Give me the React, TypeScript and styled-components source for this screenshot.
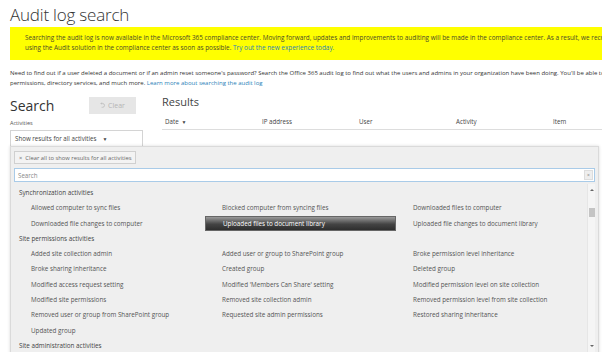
import styled, { createGlobalStyle } from 'styled-components'

const GlobalStyle = createGlobalStyle`
    body{
        margin: 0;
        background: #fff;
        font-family: "Open Sans", "Noto Sans", sans-serif;
        overflow: hidden;
    }
`

const Page = styled.div`
    position: relative;
    width: 602px;
    height: 352px;
    overflow: hidden;
    padding-left: 10px;
    box-sizing: border-box;
    color: #444;
`

const Title = styled.h1`
    margin: 0;
    padding-top: 3px;
    height: 24px;
    font-size: 17px;
    font-weight: 300;
    line-height: 24px;
    color: #333;
    letter-spacing: -0.2px;
`

const Banner = styled.div`
    background: #ffff00;
    height: 33px;
    padding: 6px 0 0 15px;
    box-sizing: border-box;
    font-size: 6.4px;
    line-height: 10px;
    color: #4a4a2a;
    white-space: nowrap;
`

const Line = styled.div`
    white-space: nowrap;
`

const Link = styled.span`
    color: #2a7fb8;
`

const Intro = styled.div`
    margin-top: 8px;
    font-size: 6px;
    line-height: 10px;
    color: #333;
`

const Main = styled.div`
    display: grid;
    grid-template-columns: 152px 1fr;
    margin-top: 3px;
`

const SearchHead = styled.div`
    display: flex;
    align-items: center;
    height: 28px;
`

const Heading = styled.h2`
    margin: 0;
    width: 79px;
    font-size: 14px;
    font-weight: 400;
    line-height: 19px;
    color: #333;
`

const ClearButton = styled.div`
    display: flex;
    align-items: center;
    justify-content: center;
    gap: 2px;
    width: 47px;
    height: 17px;
    background: #e6e6e6;
    color: #b5b5b5;
    font-size: 7px;
`

const Label = styled.div`
    font-size: 5.5px;
    line-height: 8px;
    color: #555;
`

const Dropdown = styled.div`
    display: flex;
    align-items: center;
    margin-top: 3px;
    width: 133px;
    height: 17px;
    border: 1px solid #d4d4d4;
    box-sizing: border-box;
    padding-left: 4px;
    font-size: 6.2px;
    color: #444;
    background: #fff;
`

const Caret = styled.span`
    margin-left: 6px;
    font-size: 5px;
`

const Results = styled.div`
    font-size: 11px;
    color: #444;
    padding-top: 4px;
    height: 24px;
    box-sizing: border-box;
    line-height: 14px;
`

const TableHead = styled.div`
    display: grid;
    grid-template-columns: repeat(5, 97px);
    height: 14px;
    border-bottom: 1px solid #ddd;
    font-size: 6.2px;
    line-height: 14px;
    color: #444;
`

const HeadCell = styled.div`
    padding-left: 3px;
    white-space: nowrap;
`

const SortCaret = styled.span`
    font-size: 5px;
    margin-left: 3px;
`

const Panel = styled.div`
    position: absolute;
    left: 10px;
    top: 146px;
    width: 589px;
    height: 220px;
    background: #efefef;
    border: 1px solid #dadada;
    box-sizing: border-box;
    box-shadow: 0 0 3px rgba(0, 0, 0, 0.15);
    padding: 4px 3px 0 3px;
`

const Chip = styled.div`
    display: flex;
    align-items: center;
    width: fit-content;
    height: 13px;
    padding: 0 4px;
    border: 1px solid #d0d0d0;
    background: #f3f3f3;
    box-sizing: border-box;
    font-size: 5.8px;
    color: #666;
    gap: 3px;
`

const SearchBox = styled.div`
    display: flex;
    align-items: center;
    margin-top: 4px;
    height: 14px;
    width: 581px;
    border: 1px solid #a9cbe8;
    background: #fff;
    box-sizing: border-box;
    padding: 0 1px 0 3px;
    font-size: 6.2px;
    color: #888;
`

const SearchText = styled.span`
    flex: 1;
`

const SearchClear = styled.span`
    display: flex;
    align-items: center;
    justify-content: center;
    width: 9px;
    height: 10px;
    background: #eee;
    border: 1px solid #ddd;
    box-sizing: border-box;
    font-size: 5px;
    color: #777;
`

const ListArea = styled.div`
    display: flex;
    margin-top: 2px;
`

const Items = styled.div`
    flex: 1;
    padding-top: 1px;
`

const GroupName = styled.div`
    height: 15.3px;
    line-height: 15.3px;
    padding-left: 5px;
    font-size: 6.3px;
    color: #444;
`

const Grid = styled.div`
    display: grid;
    grid-template-columns: repeat(3, 191px);
`

const Item = styled.div<{ $selected?: boolean }>`
    height: 15.3px;
    padding-left: 17px;
    box-sizing: border-box;
    font-size: 6.3px;
    white-space: nowrap;
    color: ${p => p.$selected ? '#fff' : '#555'};
    background: ${p => p.$selected ? 'linear-gradient(#9a9a9a, #444 55%, #2e2e2e)' : 'transparent'};
    border: ${p => p.$selected ? '1px solid #666' : 'none'};
    line-height: ${p => p.$selected ? '13.3px' : '15.3px'};
`

const Scrollbar = styled.div`
    position: relative;
    width: 8px;
    height: 170px;
    background: #f5f5f5;
    border-left: 1px solid #e6e6e6;
`

const Arrow = styled.div<{ $down?: boolean }>`
    position: absolute;
    left: 2px;
    ${p => p.$down ? 'top: 161px;' : 'top: 5px;'}
    width: 0;
    height: 0;
    border-left: 2px solid transparent;
    border-right: 2px solid transparent;
    ${p => p.$down ? 'border-top: 2px solid #666;' : 'border-bottom: 2px solid #666;'}
`

const Thumb = styled.div`
    position: absolute;
    left: 1px;
    top: 24px;
    width: 6px;
    height: 9px;
    background: #c4c4c4;
`

type Group = { name: string, items: string[] }

const groups: Group[] = [
    {
        name: 'Synchronization activities',
        items: [
            'Allowed computer to sync files', 'Blocked computer from syncing files', 'Downloaded files to computer',
            'Downloaded file changes to computer', 'Uploaded files to document library', 'Uploaded file changes to document library',
        ],
    },
    {
        name: 'Site permissions activities',
        items: [
            'Added site collection admin', 'Added user or group to SharePoint group', 'Broke permission level inheritance',
            'Broke sharing inheritance', 'Created group', 'Deleted group',
            'Modified access request setting', "Modified 'Members Can Share' setting", 'Modified permission level on site collection',
            'Modified site permissions', 'Removed site collection admin', 'Removed permission level from site collection',
            'Removed user or group from SharePoint group', 'Requested site admin permissions', 'Restored sharing inheritance',
            'Updated group',
        ],
    },
    { name: 'Site administration activities', items: [] },
]

const UndoIcon = () => (
    <svg width="6" height="7" viewBox="0 0 6 7" fill="none" stroke="#bbb" strokeWidth="0.8">
        <path d="M1 1.5 L2.6 1.5 A1.9 1.9 0 1 1 2.6 5.3 L1.6 5.3" />
        <path d="M1.8 0.5 L0.9 1.5 L1.8 2.5" />
    </svg>
)

export default function App() {
    return <Page>
        <GlobalStyle />
        <Title>Audit log search</Title>
        <Banner>
            <Line>Searching the audit log is now available in the Microsoft 365 compliance center. Moving forward, updates and improvements to auditing will be made in the compliance center. As a result, we recommend</Line>
            <Line>using the Audit solution in the compliance center as soon as possible. <Link>Try out the new experience today.</Link></Line>
        </Banner>
        <Intro>
            <Line>Need to find out if a user deleted a document or if an admin reset someone's password? Search the Office 365 audit log to find out what the users and admins in your organization have been doing. You'll be able to search</Line>
            <Line>permissions, directory services, and much more. <Link>Learn more about searching the audit log</Link></Line>
        </Intro>
        <Main>
            <div>
                <SearchHead>
                    <Heading>Search</Heading>
                    <ClearButton><UndoIcon />Clear</ClearButton>
                </SearchHead>
                <Label>Activities</Label>
                <Dropdown>Show results for all activities<Caret>▼</Caret></Dropdown>
            </div>
            <div>
                <Results>Results</Results>
                <TableHead>
                    <HeadCell>Date<SortCaret>▼</SortCaret></HeadCell>
                    <HeadCell>IP address</HeadCell>
                    <HeadCell>User</HeadCell>
                    <HeadCell>Activity</HeadCell>
                    <HeadCell>Item</HeadCell>
                </TableHead>
            </div>
        </Main>
        <Panel>
            <Chip><span>×</span>Clear all to show results for all activities</Chip>
            <SearchBox>
                <SearchText>Search</SearchText>
                <SearchClear>×</SearchClear>
            </SearchBox>
            <ListArea>
                <Items>
                    {groups.map(g => <div key={g.name}>
                        <GroupName>{g.name}</GroupName>
                        <Grid>
                            {g.items.map(it => <Item key={it} $selected={it === 'Uploaded files to document library'}>{it}</Item>)}
                        </Grid>
                    </div>)}
                </Items>
                <Scrollbar>
                    <Arrow />
                    <Thumb />
                    <Arrow $down />
                </Scrollbar>
            </ListArea>
        </Panel>
    </Page>
}
